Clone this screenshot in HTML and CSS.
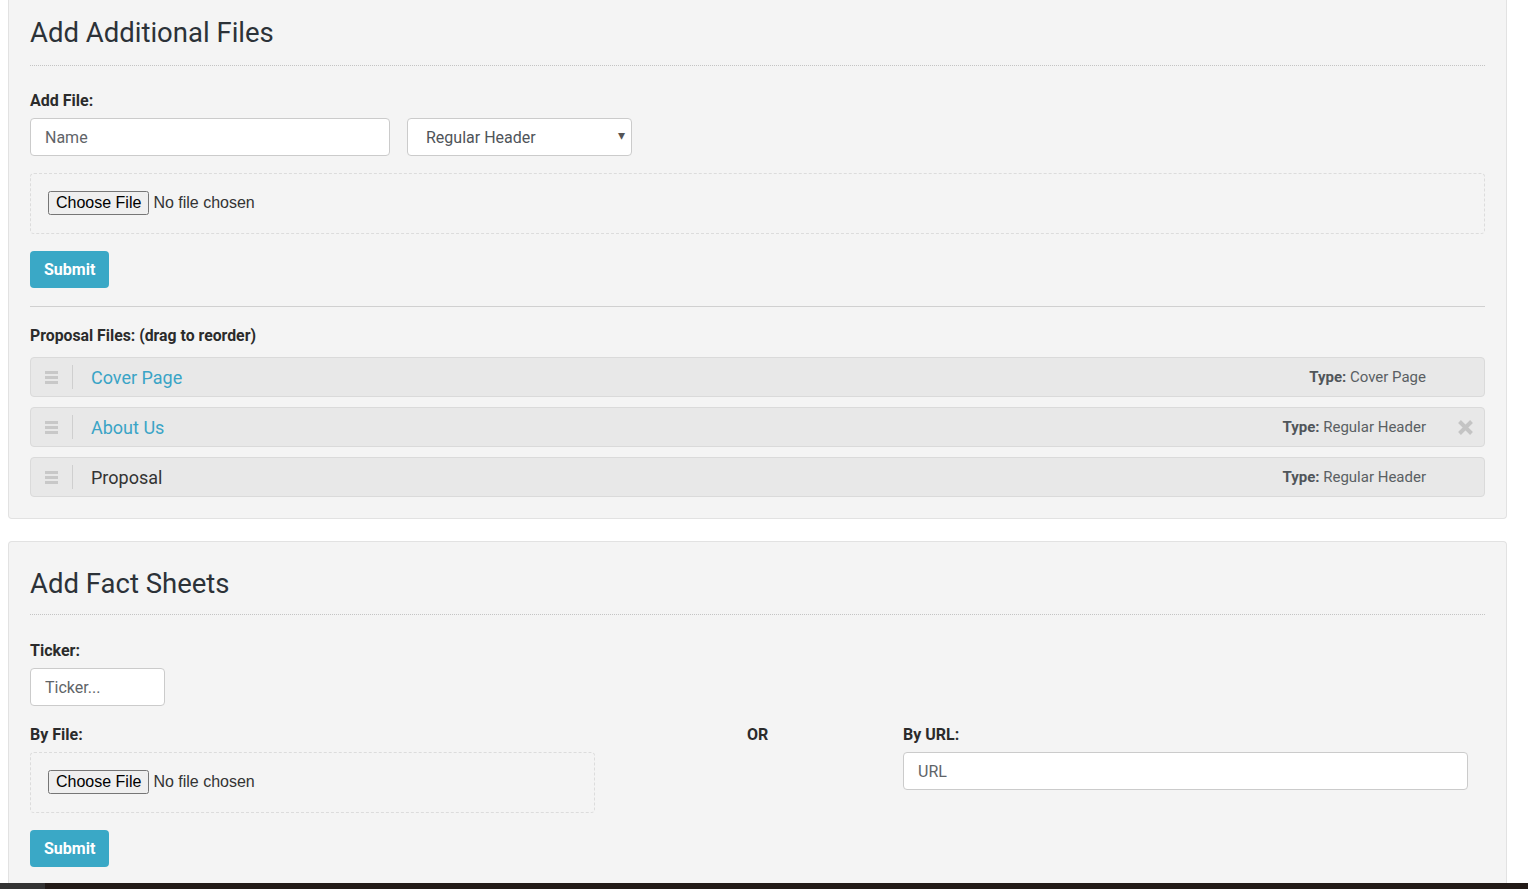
FILE: index.html
```html
<!DOCTYPE html>
<html lang="en">
  <head>
    <meta charset="utf-8" />
    <title>Proposal Files</title>
    <link rel="stylesheet" href="styles.css">
  </head>

  <body>
    <div class="page">
      <!-- Additional files panel -->
      <div class="panel panel-cut">
        <h2 class="panel-title">Add Additional Files</h2>

        <label class="field-label" for="fileName">Add File:</label>
        <div class="add-row">
          <input type="text" id="fileName" class="text-input name-input" placeholder="Name" />
          <div class="select-wrap">
            <select class="select-input">
              <option>Regular Header</option>
              <option>Cover Page</option>
            </select>
            <span class="select-arrow">&#9662;</span>
          </div>
        </div>

        <div class="file-box">
          <input type="file" class="file-input" />
        </div>

        <button type="button" class="btn-submit">Submit</button>

        <hr class="divider" />

        <p class="field-label list-label">Proposal Files: (drag to reorder)</p>
        <ul class="file-list">
          <li class="file-item">
            <span class="handle"><i></i><i></i><i></i></span>
            <a class="file-name link" href="#">Cover Page</a>
            <span class="file-type"><b>Type:</b> Cover Page</span>
            <span class="remove"></span>
          </li>
          <li class="file-item">
            <span class="handle"><i></i><i></i><i></i></span>
            <a class="file-name link" href="#">About Us</a>
            <span class="file-type"><b>Type:</b> Regular Header</span>
            <span class="remove">
              <svg width="17" height="17" viewBox="0 0 17 17">
                <path d="M2.5 2.5 L14.5 14.5 M14.5 2.5 L2.5 14.5" stroke="#c4c4c4" stroke-width="4" />
              </svg>
            </span>
          </li>
          <li class="file-item">
            <span class="handle"><i></i><i></i><i></i></span>
            <span class="file-name">Proposal</span>
            <span class="file-type"><b>Type:</b> Regular Header</span>
            <span class="remove"></span>
          </li>
        </ul>
      </div>

      <!-- Fact sheets panel -->
      <div class="panel panel-facts">
        <h2 class="panel-title">Add Fact Sheets</h2>

        <label class="field-label" for="ticker">Ticker:</label>
        <input type="text" id="ticker" class="text-input ticker-input" placeholder="Ticker..." />

        <div class="fact-grid">
          <div>
            <p class="field-label">By File:</p>
            <div class="file-box">
              <input type="file" class="file-input" />
            </div>
          </div>
          <div class="or-col">
            <p class="field-label">OR</p>
          </div>
          <div>
            <p class="field-label">By URL:</p>
            <input type="text" class="text-input url-input" placeholder="URL" />
          </div>
        </div>

        <button type="button" class="btn-submit">Submit</button>
      </div>
    </div>

    <div class="footer-strip">
      <div class="footer-left"></div>
    </div>
  </body>
</html>
```

FILE: styles.css
```css
body {
  margin: 0;
  background-color: #fff;
  font-family: Roboto, "Liberation Sans", Arial, sans-serif;
  color: #333;
}
.page {
  padding: 0 21px 0 8px;
}
.panel {
  background-color: #f4f4f4;
  border: 1px solid #e2e2e2;
  border-radius: 4px;
  padding: 0 21px;
}
.panel-cut {
  border-top: 0;
  border-radius: 0 0 4px 4px;
  padding-bottom: 21px;
}
.panel-facts {
  margin-top: 22px;
  padding-top: 26px;
  padding-bottom: 16px;
  border-bottom: 0;
  border-radius: 4px 4px 0 0;
}
.panel-title {
  margin: 0;
  padding-top: 17px;
  padding-bottom: 17px;
  font-size: 27.5px;
  font-weight: 400;
  line-height: 31px;
  color: #2c3238;
  border-bottom: 1px dotted #c4c4c4;
}
.panel-facts .panel-title {
  padding-top: 0;
  padding-bottom: 15px;
}
.field-label {
  display: block;
  margin: 0;
  margin-top: 24px;
  margin-bottom: 6px;
  font-size: 16px;
  font-weight: 700;
  line-height: 22px;
  color: #2b2b2b;
}
.panel-facts .field-label {
  margin-top: 25px;
}
.panel-facts .fact-grid .field-label {
  margin-top: 18px;
}
.add-row {
  display: flex;
  gap: 17px;
}
.text-input {
  box-sizing: border-box;
  height: 38px;
  padding: 0 14px;
  font-family: Roboto, "Liberation Sans", Arial, sans-serif;
  font-size: 16px;
  color: #333;
  background-color: #fff;
  border: 1px solid #cbcbcb;
  border-radius: 4px;
  outline: none;
}
.text-input::placeholder {
  color: #5f6468;
}
.name-input {
  width: 360px;
}
.ticker-input {
  display: block;
  width: 135px;
}
.url-input {
  display: block;
  width: 565px;
}
.select-wrap {
  position: relative;
  width: 225px;
}
.select-input {
  box-sizing: border-box;
  width: 100%;
  height: 38px;
  padding: 0 18px;
  font-family: Roboto, "Liberation Sans", Arial, sans-serif;
  font-size: 16px;
  color: #4f5459;
  background-color: #fff;
  border: 1px solid #cbcbcb;
  border-radius: 4px;
  appearance: none;
  -webkit-appearance: none;
}
.select-arrow {
  position: absolute;
  right: 7px;
  top: 9px;
  font-size: 14px;
  color: #555;
  pointer-events: none;
}
.file-box {
  margin-top: 17px;
  padding: 17px 17px;
  height: 25px;
  border: 1px dashed #dcdcdc;
  border-radius: 4px;
}
.fact-grid .file-box {
  margin-top: 0;
}
.file-input {
  font-family: "Liberation Sans", Arial, sans-serif;
  font-size: 16px;
  color: #333;
}
.btn-submit {
  display: block;
  margin-top: 17px;
  height: 37px;
  padding: 0 14px;
  font-family: Roboto, "Liberation Sans", Arial, sans-serif;
  font-size: 16px;
  font-weight: 700;
  color: #fff;
  background-color: #3aa8c6;
  border: 0;
  border-radius: 4px;
}
.divider {
  margin: 18px 0 0 0;
  border: 0;
  border-top: 1px solid #d0d0d0;
}
.panel-cut .list-label {
  margin-top: 18px;
  margin-bottom: 10px;
  font-size: 15.8px;
}
.file-list {
  list-style: none;
  margin: 0;
  padding: 0;
  display: flex;
  flex-direction: column;
  gap: 10px;
}
.file-item {
  display: flex;
  align-items: center;
  height: 38px;
  background-color: #e8e8e8;
  border: 1px solid #dadada;
  border-radius: 4px;
}
.handle {
  display: flex;
  flex-direction: column;
  justify-content: center;
  gap: 2px;
  width: 13px;
  height: 24px;
  margin-left: 14px;
  padding-right: 14px;
  margin-right: 18px;
  border-right: 1px solid #cfcfcf;
}
.handle i {
  display: block;
  width: 13px;
  height: 3px;
  background-color: #c8c8c8;
}
.file-name {
  flex: 1;
  font-size: 18px;
  color: #333;
  text-decoration: none;
}
.link {
  color: #3aa4c6;
}
.file-type {
  font-size: 15px;
  color: #5a5f63;
}
.file-type b {
  color: #50555a;
}
.remove {
  box-sizing: border-box;
  display: flex;
  justify-content: flex-end;
  width: 58px;
  padding-right: 10px;
}
.fact-grid {
  display: grid;
  grid-template-columns: 565px 308px 565px;
}
.or-col {
  padding-left: 152px;
}
.footer-strip {
  height: 6px;
  background-color: #221a17;
}
.footer-left {
  width: 45px;
  height: 6px;
  background-color: #333;
}
```
